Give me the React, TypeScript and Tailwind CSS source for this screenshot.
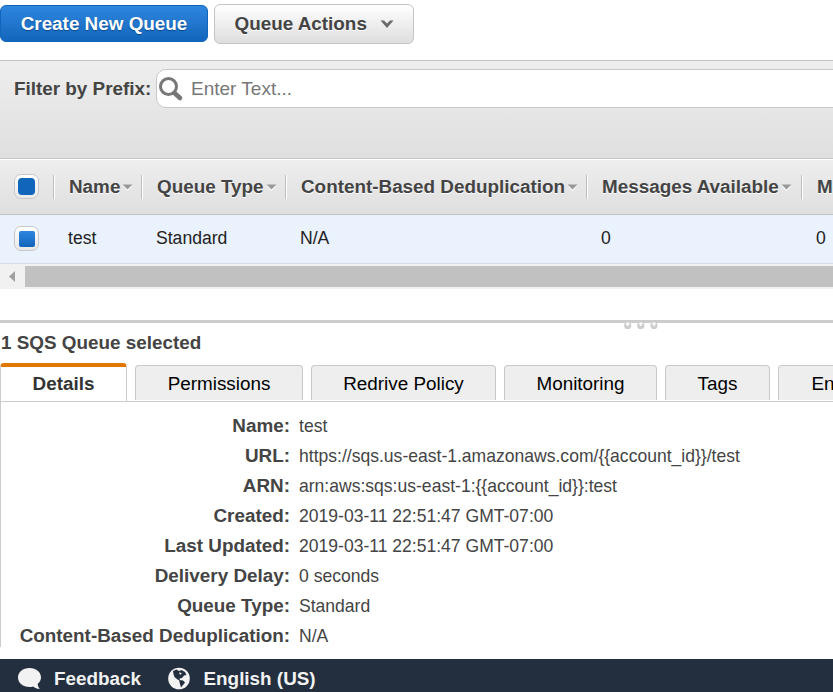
import type { ReactNode } from 'react';

type Column = {
  label: string;
  value: string;
  className: string;
};

const columns: Column[] = [
  { label: 'Name', value: 'test', className: 'w-[88px]' },
  { label: 'Queue Type', value: 'Standard', className: 'w-[144px]' },
  { label: 'Content-Based Deduplication', value: 'N/A', className: 'w-[301px]' },
  { label: 'Messages Available', value: '0', className: 'w-[215px]' },
  { label: 'Messages in Flight', value: '0', className: 'w-[215px]' },
];

const tabs = [
  { label: 'Permissions', className: 'w-[168px]' },
  { label: 'Redrive Policy', className: 'w-[185px]' },
  { label: 'Monitoring', className: 'w-[153px]' },
  { label: 'Tags', className: 'w-[105px]' },
  { label: 'Encryption', className: 'w-[156px]' },
];

const details = [
  ['Name', 'test'],
  ['URL', 'https://sqs.us-east-1.amazonaws.com/{{account_id}}/test'],
  ['ARN', 'arn:aws:sqs:us-east-1:{{account_id}}:test'],
  ['Created', '2019-03-11 22:51:47 GMT-07:00'],
  ['Last Updated', '2019-03-11 22:51:47 GMT-07:00'],
  ['Delivery Delay', '0 seconds'],
  ['Queue Type', 'Standard'],
  ['Content-Based Deduplication', 'N/A'],
];

export default function App() {
  return (
    <div className="flex h-[692px] w-full flex-col overflow-hidden whitespace-nowrap bg-white font-['Liberation_Sans',Arial,sans-serif] text-[18.87px] text-[#444]">
      <Toolbar />
      <FilterBar />
      <QueueTable />
      <Splitter />
      <h2 className="h-[40px] shrink-0 pl-px leading-[39px] font-bold">
        1 SQS Queue selected
      </h2>
      <TabBar />
      <DetailsPanel />
      <Footer />
    </div>
  );
}

function Toolbar() {
  return (
    <div className="flex h-[60px] shrink-0 items-start gap-[6px] pt-1">
      <button
        type="button"
        className="mt-px h-[37px] w-[208px] rounded-[6px] border border-[#1166bb] bg-linear-to-b from-[#2f86df] to-[#1166bb] leading-[35px] font-bold text-white [text-shadow:0_1px_1px_#0b4a8c]"
      >
        Create New Queue
      </button>
      <button
        type="button"
        className="flex h-[40px] w-[200px] items-center rounded-[6px] border border-[#c4c4c4] bg-linear-to-b from-white to-[#dedede] pl-[19.5px] font-bold [text-shadow:0_1px_0_#fff]"
      >
        Queue Actions
        <svg className="ml-[13px]" width="14" height="10" viewBox="0 0 14 10">
          <path d="M0.5 1.5H4L7 4.5L10 1.5H13.5L7 9Z" fill="#6b6b6b" />
        </svg>
      </button>
    </div>
  );
}

function FilterBar() {
  return (
    <div className="flex h-[98px] shrink-0 items-start border-t border-[#c4c4c4] bg-linear-to-b from-[#eee] to-[#dfdfdf] pt-2 pl-[14px]">
      <label className="w-[142px] shrink-0 leading-[39px] font-bold">
        Filter by Prefix:
      </label>
      <div className="flex h-[39px] w-[700px] shrink-0 items-center rounded-[10px] border border-[#c8c8c8] bg-white pl-px">
        <svg width="26" height="26" viewBox="0 0 26 26" fill="none">
          <circle cx="10.5" cy="10.5" r="8" stroke="#777" strokeWidth="3" />
          <path d="M16.5 17L22 22" stroke="#777" strokeWidth="4.6" strokeLinecap="round" />
        </svg>
        <span className="ml-[7px] text-[19px] leading-[36px] text-[#777]">
          Enter Text...
        </span>
      </div>
    </div>
  );
}

function QueueTable() {
  return (
    <div className="w-full shrink-0 overflow-hidden">
      <div className="flex h-[57px] items-center border-t border-b border-[#c4c4c4] bg-linear-to-b from-[#eee] to-[#dfdfdf] shadow-[inset_0_1px_0_#fff]">
        <div className="w-[53px] shrink-0 pl-[14px]">
          <Checkbox>
            <span className="size-[17px] rounded-[4px] bg-[#1166bb]" />
          </Checkbox>
        </div>
        {columns.map((col) => (
          <div
            key={col.label}
            className={`flex h-[24px] shrink-0 items-center border-l border-[#bdbdbd] pl-[15px] font-bold shadow-[inset_1px_0_0_#fff] [text-shadow:0_1px_0_#fff] ${col.className}`}
          >
            <span className="pt-px leading-6">{col.label}</span>
            <svg className="mt-px ml-[2px]" width="11" height="7" viewBox="0 0 11 7">
              <path d="M0.5 1.5H10.5L5.5 7Z" fill="#fff" />
              <path d="M0.5 0.5H10.5L5.5 5.5Z" fill="#999" />
            </svg>
          </div>
        ))}
      </div>

      <div className="flex h-[49px] items-center border-b border-[#d6dbe6] bg-[#eaf2fe] text-[17.6px] text-[#222]">
        <div className="w-[53px] shrink-0 pb-px pl-[14px]">
          <Checkbox>
            <span className="size-4 rounded-[2px] bg-linear-to-b from-[#2f86df] to-[#1166bb]" />
          </Checkbox>
        </div>
        {columns.map((col) => (
          <div key={col.label} className={`shrink-0 pb-[2px] pl-[15px] ${col.className}`}>
            {col.value}
          </div>
        ))}
      </div>

      <div className="flex h-[25px] items-center bg-[#f1f1f1]">
        <svg width="25" height="25" viewBox="0 0 25 25">
          <path d="M9 12.5L15 7V18Z" fill="#a0a0a0" />
        </svg>
        <div className="h-[21px] flex-1 bg-[#c1c1c1]" />
      </div>
    </div>
  );
}

function Checkbox({ children }: { children: ReactNode }) {
  return (
    <div className="flex size-[25px] items-center justify-center rounded-[7px] border border-[#c8c8c8] bg-linear-to-b from-white to-[#e8e8e8]">
      {children}
    </div>
  );
}

function Splitter() {
  return (
    <div className="relative mt-[31px] h-[3px] shrink-0 bg-[#ccc]">
      {/* drag handle hangs below the bar */}
      <svg className="absolute top-[2px] left-[624px]" width="34" height="8" viewBox="0 0 34 8">
        {[3.7, 16.8, 30].map((x) => (
          <g key={x}>
            <circle cx={x} cy="3.4" r="3.6" fill="#cdcdcd" />
            <path d={`M${x - 1.6} 0.5H${x + 1.6}V2.5L${x} 4.5L${x - 1.6} 2.5Z`} fill="#fafafa" />
          </g>
        ))}
      </svg>
    </div>
  );
}

function TabBar() {
  return (
    <div className="flex h-[38px] shrink-0 items-end gap-2 text-black">
      <div className="h-[38px] w-[127px] shrink-0 rounded-t-[4px] border-x border-t-4 border-x-[#ccc] border-t-[#e07700] bg-white text-center leading-[33px] font-bold text-[#333]">
        Details
      </div>
      {tabs.map((tab) => (
        <div
          key={tab.label}
          className={`mb-px h-[35px] shrink-0 rounded-t-[4px] border border-b-0 border-[#c8c8c8] bg-[#eee] text-center leading-[35px] ${tab.className}`}
        >
          {tab.label}
        </div>
      ))}
    </div>
  );
}

function DetailsPanel() {
  return (
    <dl className="mb-3 h-[246px] shrink-0 border-t border-l border-[#ccc] pt-[9px]">
      {details.map(([label, value]) => (
        <div key={label} className="flex h-[30px] leading-[30px]">
          <dt className="w-[289px] shrink-0 text-right font-bold">{label}:</dt>
          <dd className="pl-[9px] text-[17.56px] leading-[30px]">{value}</dd>
        </div>
      ))}
    </dl>
  );
}

function Footer() {
  return (
    <footer className="flex h-[33px] shrink-0 items-center bg-[#232f3e] pt-[5px] pl-[17px] font-bold text-[#f2f2f2]">
      <svg width="25" height="23" viewBox="0 0 25 23">
        <path
          d="M12.5 1C6 1 1 5 1 10.5S6 20 12.5 20C14 20 15 19.8 16.2 19.4C18 21 20 21.8 22.7 22C21.5 20.5 20.8 19 20.7 16.8C22.8 15 24 13 24 10.5C24 5 19 1 12.5 1Z"
          fill="#f2f2f2"
        />
      </svg>
      <span className="ml-[12px] leading-[27px]">Feedback</span>
      <svg className="mt-px ml-[27px]" width="22" height="23" viewBox="0 0 22 23">
        <circle cx="11" cy="11.5" r="10.8" fill="#f2f2f2" />
        <path
          d="M5 4L8.5 2.5L11 4L13.5 3L17 5L18.5 8L16 8.5L14 11L11.5 11.5L12 13.5L9.5 12.5L6.5 10L5.5 7Z"
          fill="#232f3e"
        />
        <path d="M11 13L15 13.5L17 15.5L15 18L13 20.5L12 17Z" fill="#232f3e" />
        <path d="M11 5.5L14 6L12 8Z" fill="#f2f2f2" />
      </svg>
      <span className="ml-[13.5px] leading-[27px]">English (US)</span>
    </footer>
  );
}
